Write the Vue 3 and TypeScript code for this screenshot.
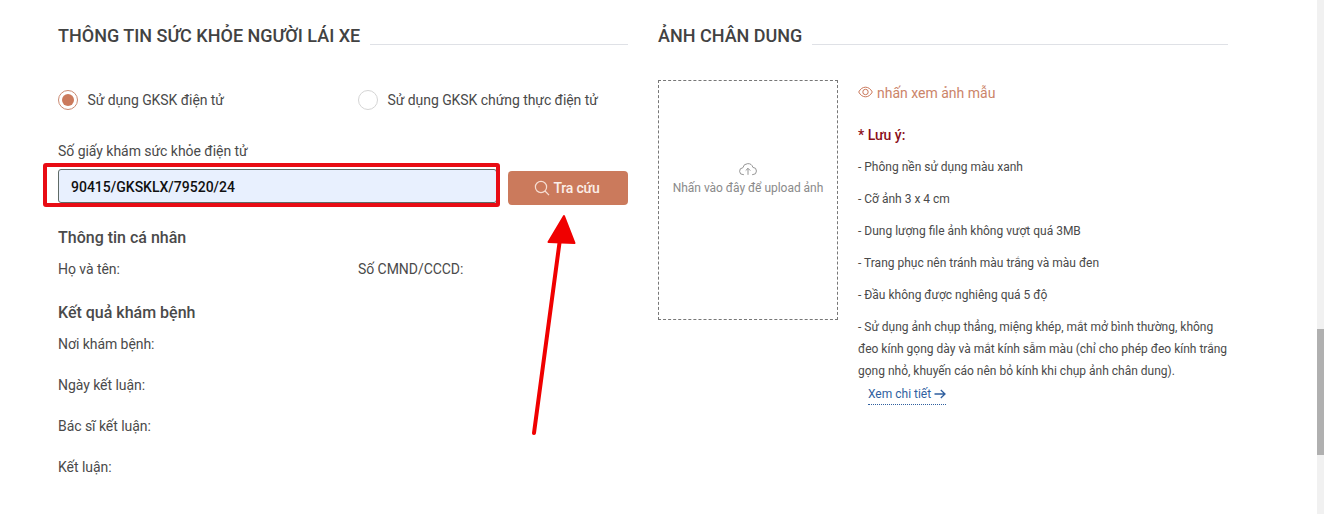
<script setup lang="ts">
const notes: string[] = [
  '- Phông nền sử dụng màu xanh',
  '- Cỡ ảnh 3 x 4 cm',
  '- Dung lượng file ảnh không vượt quá 3MB',
  '- Trang phục nên tránh màu trắng và màu đen',
  '- Đầu không được nghiêng quá 5 độ',
]
const results: string[] = ['Nơi khám bệnh:', 'Ngày kết luận:', 'Bác sĩ kết luận:', 'Kết luận:']
</script>

<template>
  <div class="page">
    <div class="columns">
      <section class="col">
        <div class="heading"><h2>THÔNG TIN SỨC KHỎE NGƯỜI LÁI XE</h2><span class="rule"></span></div>
        <div class="radios">
          <label class="radio"><span class="dot on"></span>Sử dụng GKSK điện tử</label>
          <label class="radio"><span class="dot"></span>Sử dụng GKSK chứng thực điện tử</label>
        </div>
        <div class="field-label">Số giấy khám sức khỏe điện tử</div>
        <div class="search">
          <div class="input">90415/GKSKLX/79520/24</div>
          <button class="btn">
            <svg width="16" height="16" viewBox="0 0 16 16" fill="none" stroke="#f6ddd2" stroke-width="1.2"><circle cx="7" cy="7" r="5.6"/><path d="M11 11l4 4.2"/></svg>
            Tra cứu
          </button>
        </div>
        <h3 class="sub first">Thông tin cá nhân</h3>
        <div class="two"><span>Họ và tên:</span><span>Số CMND/CCCD:</span></div>
        <h3 class="sub second">Kết quả khám bệnh</h3>
        <div class="results"><div v-for="r in results" :key="r">{{ r }}</div></div>
      </section>

      <section class="col">
        <div class="heading"><h2>ẢNH CHÂN DUNG</h2><span class="rule"></span></div>
        <div class="photo">
          <div class="upload">
            <svg width="18" height="14" viewBox="0 0 18 14" fill="none" stroke="#8a8a8a" stroke-width="0.9"><path d="M5 12.6H4.2A3.4 3.4 0 0 1 3.8 5.8 5.2 5.2 0 0 1 13.9 5.4 3.6 3.6 0 0 1 13.8 12.6H13"/><path d="M9 12.8V6.4M6.7 8.6 9 6.3l2.3 2.3"/></svg>
            <span>Nhấn vào đây để upload ảnh</span>
          </div>
          <div class="info">
            <div class="sample">
              <svg class="eye" width="15" height="12" viewBox="0 0 15 12" fill="none" stroke="#c9775a" stroke-width="1"><path d="M.7 6C2.4 2.8 4.8 1.2 7.5 1.2S12.6 2.8 14.3 6c-1.7 3.2-4.1 4.8-6.8 4.8S2.4 9.2.7 6Z"/><circle cx="7.5" cy="6" r="2.7"/></svg>
              nhấn xem ảnh mẫu
            </div>
            <div class="note-title">* Lưu ý:</div>
            <p v-for="n in notes" :key="n">{{ n }}</p>
            <p class="long">- Sử dụng ảnh chụp thẳng, miệng khép, mắt mở bình thường, không đeo kính gọng dày và mắt kính sẫm màu (chỉ cho phép đeo kính trắng gọng nhỏ, khuyến cáo nên bỏ kính khi chụp ảnh chân dung).</p>
            <a class="more">Xem chi tiết
              <svg width="12" height="10" viewBox="0 0 12 10" fill="none" stroke="#2f5f9f" stroke-width="1.3"><path d="M.5 5h10.500M6.800 1l4.200 4-4.200 4"/></svg>
            </a>
          </div>
        </div>
      </section>
    </div>

    <div class="redbox"></div>
    <svg class="arrow" width="60" height="230" viewBox="0 0 60 230">
      <path d="M6 224 32 30" stroke="#f00000" stroke-width="4" stroke-linecap="round" fill="none"/>
      <path d="M36 7 46.500 34 20.500 33Z" fill="#f00000" stroke="#f00000" stroke-width="2" stroke-linejoin="round"/>
    </svg>
    <div class="scrollbar"><div class="thumb"></div></div>
  </div>
</template>

<style scoped>
.page {
  position: relative;
  width: 1324px;
  height: 514px;
  overflow: hidden;
  background: #fff;
  color: #4a4a4a;
  font-family: Roboto, "Liberation Sans", sans-serif;
  font-size: 14px;
  box-sizing: border-box;
  padding: 25px 0 0 58px;
}
.columns { display: grid; grid-template-columns: 570px 570px; column-gap: 30px; }
.heading { display: flex; align-items: flex-start; gap: 10px; height: 23px; }
h2 { margin: 0; font-size: 18px; line-height: 22px; font-weight: 500; color: #424242; white-space: nowrap; }
.rule { flex: 1; height: 1px; margin-top: 19px; background: #dfe1e6; }
.radios { display: grid; grid-template-columns: 300px 270px; margin-top: 42px; letter-spacing: -0.06px; }
.radio { display: flex; align-items: center; gap: 9.5px; height: 20px; white-space: nowrap; }
.dot { width: 18px; height: 18px; border: 1px solid #d5d5d5; border-radius: 50%; flex: none; position: relative; }
.dot.on { border-color: #cb8a72; }
.dot.on::after { content: ""; position: absolute; inset: 3px; border-radius: 50%; background: #cb7a5c; }
.field-label { margin-top: 32px; line-height: 18px; letter-spacing: -0.04px; }
.search { display: flex; align-items: flex-start; gap: 11px; margin-top: 9px; height: 36px; }
.input {
  width: 439px; height: 34px; box-sizing: border-box; border: 1px solid #5f6b66; border-radius: 3px;
  background: #e8f0fe; color: #111; font-weight: 500; line-height: 34px; padding-left: 12px;
}
.btn {
  width: 120px; height: 34px; margin-top: 2px; border: 0; border-radius: 4px; background: #cb7a5c; color: #fbeee8;
  font: 500 14px Roboto, "Liberation Sans", sans-serif; letter-spacing: -0.2px;
  display: flex; align-items: center; justify-content: center; gap: 3px; padding: 0 2px 0 0;
}
.sub { margin: 0; font-size: 16px; line-height: 20px; font-weight: 500; color: #4a4a4a; }
.first { margin-top: 23px; }
.second { margin-top: 25px; }
.two { display: grid; grid-template-columns: 300px 270px; margin-top: 12px; line-height: 18px; letter-spacing: -0.05px; }
.results { margin-top: 12px; display: grid; row-gap: 23px; line-height: 18px; letter-spacing: -0.05px; }
.photo { display: flex; gap: 20px; margin-top: 32px; }
.upload {
  width: 180px; height: 240px; box-sizing: border-box; border: 1px dashed #777; flex: none;
  display: flex; flex-direction: column; align-items: center; padding-top: 81px; color: #8a8a8a; font-size: 12px; line-height: 16px;
}
.upload span { margin-top: 4px; white-space: nowrap; letter-spacing: -0.03px; }
.info { width: 370px; }
.sample { color: #cb8469; display: flex; align-items: center; gap: 4px; line-height: 18px; margin-top: 4px; }
.eye { margin-top: -3px; }
.note-title { color: #8b0f1a; font-weight: 500; margin-top: 24px; line-height: 18px; }
p { margin: 14px 0 0; font-size: 12px; line-height: 18px; color: #4a4a4a; }
p.long { line-height: 22px; margin-top: 12px; }
.more {
  display: inline-flex; align-items: center; gap: 3px; margin-left: 10px; color: #2f5f9f; font-size: 12px;
  line-height: 18px; border-bottom: 1px dotted #2f5f9f; margin-top: 3px; padding-bottom: 1px;
}
.redbox {
  position: absolute; left: 43px; top: 163px; width: 457px; height: 44px; box-sizing: border-box;
  border: 4px solid #e80c14; border-radius: 3px;
}
.arrow { position: absolute; left: 528px; top: 209px; }
.scrollbar { position: absolute; right: 0; top: 0; width: 7px; height: 514px; background: #f1f1f1; }
.thumb { margin-top: 329px; height: 126px; background: #b0b0b0; }
</style>
